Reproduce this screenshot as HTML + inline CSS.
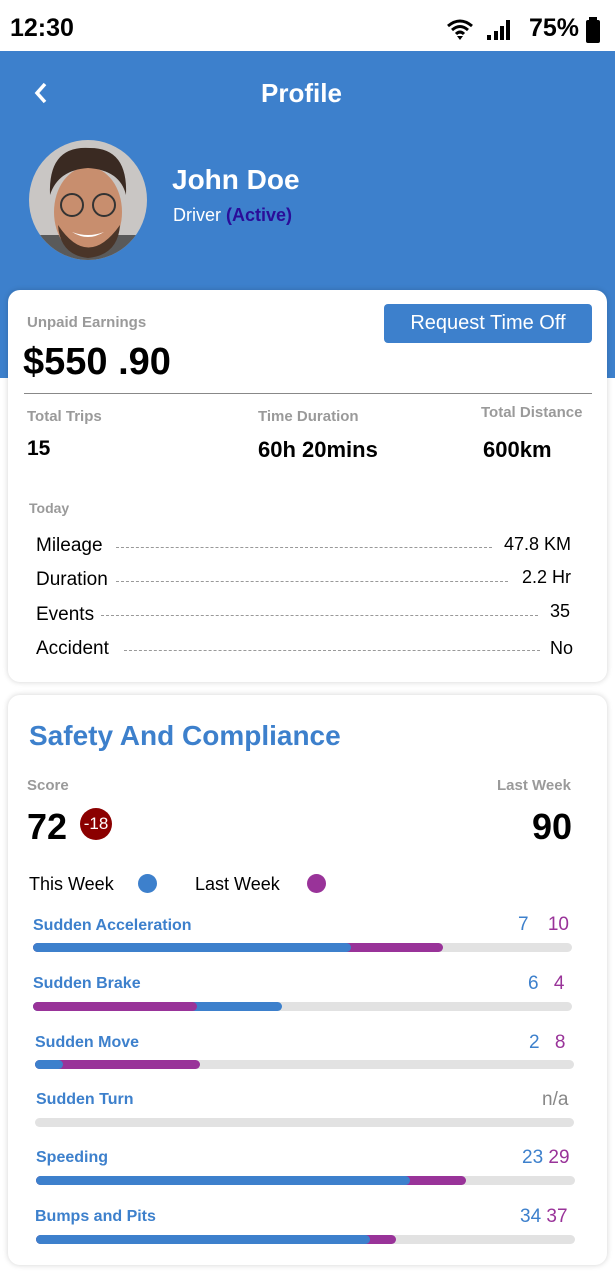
<!DOCTYPE html><html><head><meta charset="utf-8"><style>
*{margin:0;padding:0;box-sizing:border-box}
body{width:615px;height:1275px;background:#fff;font-family:"Liberation Sans",sans-serif;position:relative;overflow:hidden}
.a{position:absolute;white-space:nowrap}
.b{font-weight:bold}
.card{position:absolute;background:#fff;border-radius:12px;box-shadow:0 0 6px rgba(0,0,0,.18)}
.g{color:#9a9a9a;font-weight:bold;font-size:15px}
.dash{position:absolute;border-top:1px dashed #999;height:0}
.lbl{color:#3d80cc;font-weight:bold;font-size:16px}
.tr{position:absolute;height:9px;border-radius:5px;background:#e2e2e2}
.bar{position:absolute;height:9px;border-radius:5px}
.bl{background:#3d80cc}.pu{background:#993399}
</style></head><body>
<div class="a b" style="left:10px;top:14px;font-size:25px">12:30</div>
<svg class="a" style="left:446px;top:18px" width="28" height="24" viewBox="0 0 28 24"><path d="M2 8Q14 -2 26 8M6 12Q14 5 22 12M10 16Q14 12 18 16" stroke="#000" stroke-width="3" fill="none"/><path d="M11 18L14 22L17 18Z" fill="#000"/></svg>
<svg class="a" style="left:486px;top:18px" width="26" height="24"><rect x="1" y="17" width="4" height="5"/><rect x="8" y="13" width="4" height="9"/><rect x="14" y="8" width="4" height="14"/><rect x="20" y="2" width="4" height="20"/></svg>
<div class="a b" style="left:529px;top:14px;font-size:25px">75%</div>
<svg class="a" style="left:584px;top:17px" width="20" height="27"><rect x="5" y="0" width="8" height="4"/><rect x="2" y="3" width="14" height="23" rx="2"/></svg>
<div class="a" style="left:0;top:51px;width:615px;height:327px;background:#3d80cc"></div>
<svg class="a" style="left:32px;top:81px" width="20" height="24"><path d="M13 3L5 12L13 21" stroke="#fff" stroke-width="3.5" fill="none"/></svg>
<div class="a b" style="left:0;width:603px;text-align:center;top:78px;font-size:26px;color:#fff">Profile</div>
<svg class="a" style="left:28px;top:140px" width="120" height="120" viewBox="0 0 120 120"><defs><clipPath id="c"><ellipse cx="60" cy="60" rx="59" ry="60"/></clipPath></defs><g clip-path="url(#c)"><rect width="120" height="120" fill="#c9c6c4"/><rect x="0" y="95" width="120" height="30" fill="#5a5a5a"/><ellipse cx="60" cy="72" rx="34" ry="45" fill="#c88e6e"/><path d="M22 55Q20 5 62 8Q100 8 98 55Q92 30 60 28Q30 30 22 55Z" fill="#3a2a22"/><path d="M30 85Q60 130 92 85Q90 115 60 118Q32 115 30 85Z" fill="#4a3528"/><circle cx="44" cy="65" r="11" fill="none" stroke="#333" stroke-width="2"/><circle cx="76" cy="65" r="11" fill="none" stroke="#333" stroke-width="2"/><path d="M44 92Q60 102 76 92Q60 98 44 92Z" fill="#fff"/></g></svg>
<div class="a b" style="left:172px;top:164px;font-size:28px;color:#fff">John Doe</div>
<div class="a" style="left:173px;top:205px;font-size:18px;color:#fff">Driver <span class="b" style="color:#2a0d99">(Active)</span></div>

<div class="card" style="left:8px;top:290px;width:599px;height:392px"></div>
<div class="a g" style="left:27px;top:314px">Unpaid Earnings</div>
<div class="a b" style="left:23px;top:341px;font-size:38px">$550 .90</div>
<div class="a" style="left:384px;top:304px;width:208px;height:39px;background:#3d80cc;border-radius:4px;color:#fff;font-size:20px;text-align:center;line-height:39px">Request Time Off</div>
<div class="a" style="left:24px;top:393px;width:568px;height:1px;background:#888"></div>
<div class="a g" style="left:27px;top:408px">Total Trips</div>
<div class="a g" style="left:258px;top:408px">Time Duration</div>
<div class="a g" style="left:481px;top:404px">Total Distance</div>
<div class="a b" style="left:27px;top:437px;font-size:21px">15</div>
<div class="a b" style="left:258px;top:437px;font-size:22px">60h 20mins</div>
<div class="a b" style="left:483px;top:437px;font-size:22px">600km</div>
<div class="a g" style="left:29px;top:500px;font-size:14px">Today</div>
<div class="a" style="left:36px;top:535px;font-size:19px">Mileage</div><div class="dash" style="left:116px;width:376px;top:547px"></div><div class="a" style="left:504px;top:534px;font-size:18px">47.8 KM</div>
<div class="a" style="left:36px;top:569px;font-size:19px">Duration</div><div class="dash" style="left:116px;width:392px;top:581px"></div><div class="a" style="left:522px;top:567px;font-size:18px">2.2 Hr</div>
<div class="a" style="left:36px;top:604px;font-size:19px">Events</div><div class="dash" style="left:101px;width:437px;top:615px"></div><div class="a" style="left:550px;top:601px;font-size:18px">35</div>
<div class="a" style="left:36px;top:638px;font-size:19px">Accident</div><div class="dash" style="left:124px;width:416px;top:650px"></div><div class="a" style="left:550px;top:638px;font-size:18px">No</div>

<div class="card" style="left:8px;top:695px;width:599px;height:570px"></div>
<div class="a b" style="left:29px;top:720px;font-size:28px;color:#3d80cc">Safety And Compliance</div>
<div class="a g" style="left:27px;top:777px">Score</div>
<div class="a g" style="left:497px;top:777px">Last Week</div>
<div class="a b" style="left:27px;top:806px;font-size:36px">72</div>
<div class="a" style="left:80px;top:808px;width:32px;height:32px;border-radius:50%;background:#8b0000;color:#fff;font-size:17px;text-align:center;line-height:32px">-18</div>
<div class="a b" style="left:532px;top:806px;font-size:36px">90</div>
<div class="a" style="left:29px;top:874px;font-size:18px">This Week</div>
<div class="a" style="left:138px;top:874px;width:19px;height:19px;border-radius:50%;background:#3d80cc"></div>
<div class="a" style="left:195px;top:874px;font-size:18px">Last Week</div>
<div class="a" style="left:307px;top:874px;width:19px;height:19px;border-radius:50%;background:#993399"></div>

<div class="a lbl" style="left:33px;top:917px">Sudden Acceleration</div>
<div class="a" style="left:518px;top:914px;font-size:19px;color:#3d80cc">7 <span style="color:#993399;margin-left:14px">10</span></div>
<div class="tr" style="left:33px;width:539px;top:943px"></div><div class="bar pu" style="left:33px;width:410px;top:943px"></div><div class="bar bl" style="left:33px;width:318px;top:943px"></div>

<div class="a lbl" style="left:33px;top:975px">Sudden Brake</div>
<div class="a" style="left:528px;top:973px;font-size:19px;color:#3d80cc">6 <span style="color:#993399;margin-left:10px">4</span></div>
<div class="tr" style="left:33px;width:539px;top:1002px"></div><div class="bar bl" style="left:33px;width:249px;top:1002px"></div><div class="bar pu" style="left:33px;width:164px;top:1002px"></div>

<div class="a lbl" style="left:35px;top:1034px">Sudden Move</div>
<div class="a" style="left:529px;top:1032px;font-size:19px;color:#3d80cc">2 <span style="color:#993399;margin-left:10px">8</span></div>
<div class="tr" style="left:35px;width:539px;top:1060px"></div><div class="bar pu" style="left:35px;width:165px;top:1060px"></div><div class="bar bl" style="left:35px;width:28px;top:1060px"></div>

<div class="a lbl" style="left:36px;top:1091px">Sudden Turn</div>
<div class="a" style="left:542px;top:1089px;font-size:19px;color:#888">n/a</div>
<div class="tr" style="left:35px;width:539px;top:1118px"></div>

<div class="a lbl" style="left:36px;top:1149px">Speeding</div>
<div class="a" style="left:522px;top:1147px;font-size:19px;color:#3d80cc">23 <span style="color:#993399">29</span></div>
<div class="tr" style="left:36px;width:539px;top:1176px"></div><div class="bar pu" style="left:36px;width:430px;top:1176px"></div><div class="bar bl" style="left:36px;width:374px;top:1176px"></div>

<div class="a lbl" style="left:35px;top:1208px">Bumps and Pits</div>
<div class="a" style="left:520px;top:1206px;font-size:19px;color:#3d80cc">34 <span style="color:#993399">37</span></div>
<div class="tr" style="left:36px;width:539px;top:1235px"></div><div class="bar pu" style="left:36px;width:360px;top:1235px"></div><div class="bar bl" style="left:36px;width:334px;top:1235px"></div>
</body></html>
